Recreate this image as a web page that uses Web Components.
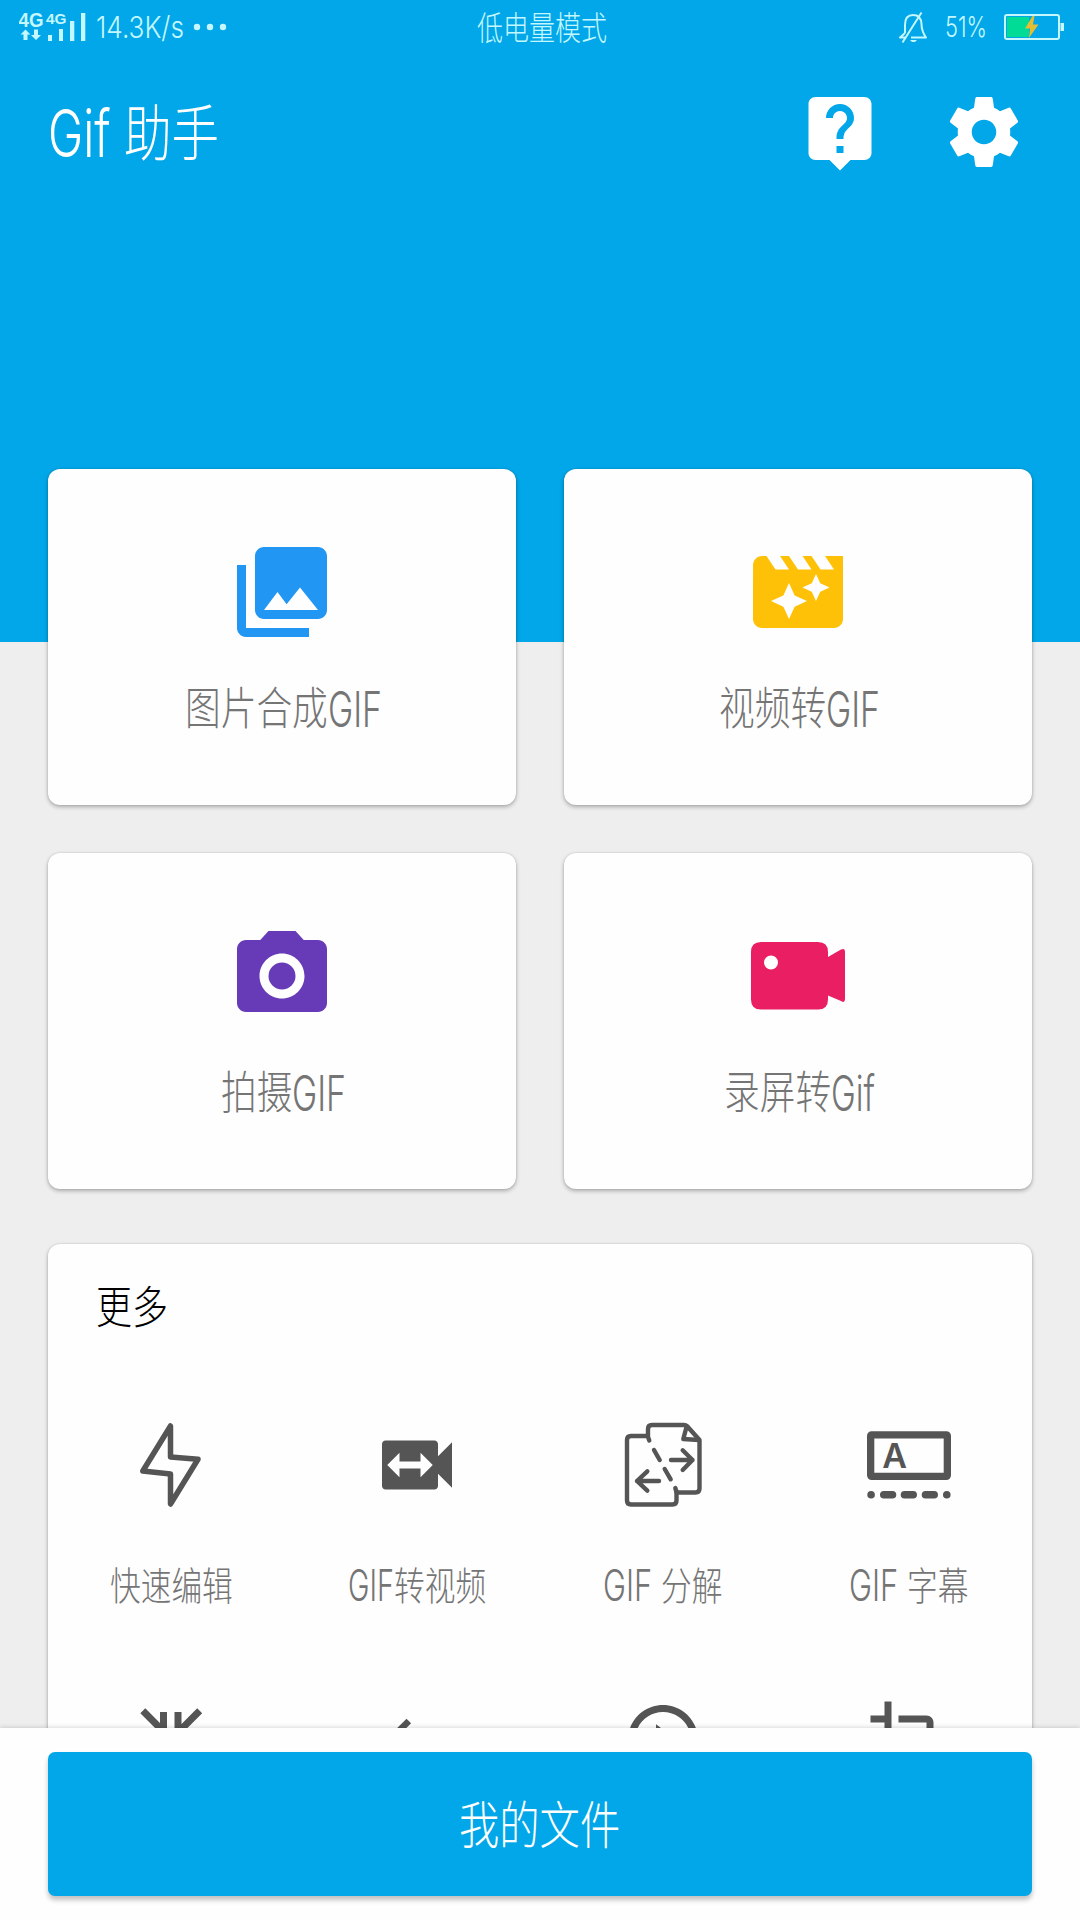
<!DOCTYPE html>
<html lang="zh-CN">
<head>
<meta charset="utf-8">
<title>Gif 助手</title>
<style>
    html, body {
        margin: 0;
        padding: 0;
    }
    body {
        width: 1080px;
        height: 1920px;
        overflow: hidden;
        font-family: "Inter", "Noto Sans CJK SC", sans-serif;
    }
</style>
</head>
<body>
<gif-home></gif-home>

<script>
"use strict";

const ICONS = {
    help: '<path d="M19 2H5c-1.11 0-2 .9-2 2v14c0 1.1.89 2 2 2h4l3 3 3-3h4c1.1 0 2-.9 2-2V4c0-1.1-.9-2-2-2zm-6 16h-2v-2h2v2zm2.07-7.75l-.9.92C13.45 11.9 13 12.5 13 14h-2v-.5c0-1.1.45-2.1 1.17-2.83l1.24-1.26c.37-.36.59-.86.59-1.41 0-1.1-.9-2-2-2s-2 .9-2 2H8c0-2.21 1.79-4 4-4s4 1.79 4 4c0 .88-.36 1.68-.93 2.25z"/>',
    settings: '<path d="M19.43 12.98c.04-.32.07-.64.07-.98s-.03-.66-.07-.98l2.11-1.65c.19-.15.24-.42.12-.64l-2-3.46c-.12-.22-.39-.3-.61-.22l-2.49 1c-.52-.4-1.08-.73-1.69-.98l-.38-2.65C14.46 2.18 14.25 2 14 2h-4c-.25 0-.46.18-.49.42l-.38 2.65c-.61.25-1.17.59-1.69.98l-2.49-1c-.23-.09-.49 0-.61.22l-2 3.46c-.13.22-.07.49.12.64l2.11 1.65c-.04.32-.07.65-.07.98s.03.66.07.98l-2.11 1.65c-.19.15-.24.42-.12.64l2 3.46c.12.22.39.3.61.22l2.49-1c.52.4 1.08.73 1.69.98l.38 2.65c.03.24.24.42.49.42h4c.25 0 .46-.18.49-.42l.38-2.65c.61-.25 1.17-.59 1.69-.98l2.49 1c.23.09.49 0 .61-.22l2-3.46c.12-.22.07-.49-.12-.64l-2.11-1.65zM12 15.5c-1.93 0-3.5-1.57-3.5-3.5s1.57-3.5 3.5-3.5 3.5 1.57 3.5 3.5-1.57 3.5-3.5 3.5z"/>',
    photos: '<path fill-rule="evenodd" d="M22 16V4c0-1.1-.9-2-2-2H8c-1.1 0-2 .9-2 2v12c0 1.1.9 2 2 2h12c1.1 0 2-.9 2-2zM11 12l2.03 2.71L16 11l4 5H8l3-4zM2 6v14c0 1.1.9 2 2 2h14v-2H4V6H2z"/>',
    movie: '<path d="M18 4l2 3h-3l-2-3h-2l2 3h-3l-2-3H8l2 3H7L5 4H4c-1.1 0-1.99.9-1.99 2L2 18c0 1.1.9 2 2 2h16c1.1 0 2-.9 2-2V4h-4zm-6.75 11.25L10 18l-1.25-2.75L6 14l2.75-1.25L10 10l1.25 2.75L14 14l-2.75 1.25zm5.69-3.31L16 14l-.94-2.06L13 11l2.06-.94L16 8l.94 2.06L19 11l-2.06.94z"/>',
    camera: '<path fill-rule="evenodd" d="M9 2L7.17 4H4c-1.1 0-2 .9-2 2v12c0 1.1.9 2 2 2h16c1.1 0 2-.9 2-2V6c0-1.1-.9-2-2-2h-3.17L15 2H9zm3 15c-2.76 0-5-2.24-5-5s2.24-5 5-5 5 2.24 5 5-2.24 5-5 5z"/><circle cx="12" cy="12" r="3"/>',
    record: '<g transform="scale(.22222)"><path fill-rule="evenodd" d="M17 20H74Q84 20 84 30V35L97 27.5Q101 25.5 101 30V77Q101 81.500 97 79L84 73.500V77.500Q84 87.500 74 87.500H17Q7 87.500 7 77.500V30Q7 20 17 20ZM27 33.500A7 7 0 1 0 27 47.500A7 7 0 1 0 27 33.500Z"/></g>',
    switchVideo: '<path d="M18 9.500V6c0-.55-.45-1-1-1H3c-.55 0-1 .45-1 1v12c0 .55.45 1 1 1h14c.55 0 1-.45 1-1v-3.500l4 4v-13l-4 4zm-5 6V13H7v2.500L3.500 12 7 8.500V11h6V8.500l3.500 3.500-3.500 3.500z"/>',
    bolt: '<g transform="scale(.285714)"><path fill="none" stroke="currentColor" stroke-width="5.500" stroke-linejoin="round" d="M41.500 3V34L69 36.200L41.500 81V51L13.800 48Z"/></g>',
    split: `<g transform="scale(.285714)" fill="none" stroke="currentColor" stroke-width="4.400" stroke-linecap="round" stroke-linejoin="round">
        <path d="M26 13H10Q6 13 6 17V77.500Q6 81.500 10 81.500H51.500Q55.500 81.500 55.500 77.500V69.500H74.500Q78.500 69.500 78.500 65.500V17L66 3Q65 2 63 2H31Q27 2 27 6V14L28.300 17.500"/>
        <path d="M65.500 4L62.300 16L78 17"/>
        <path d="M33 27L38.700 37M43.700 46L49.700 56.300M54.300 65L55.500 69"/>
        <path d="M50 37H71.500M61.700 27.300L71.500 37L61.700 47"/>
        <path d="M38 58H16M26.300 48.300L16 58L26.300 67.700"/>
    </g>`,
    caption: `<g transform="scale(.285714)">
        <rect x="3.650" y="11.850" width="76.700" height="41.500" rx="1" fill="none" stroke="currentColor" stroke-width="7.300"/>
        <text x="27.700" y="44.800" text-anchor="middle" font-family="Inter, sans-serif" font-weight="600" font-size="34">A</text>
        <path fill="none" stroke="currentColor" stroke-width="7.600" stroke-linecap="round" d="M4.100 71.700h.01M16.800 71.700H25.500M37.500 71.700H46.200M58.500 71.700H67.200M79.800 71.700h.01"/>
    </g>`,
    merge: '<g transform="scale(.285714)"><path fill="none" stroke="currentColor" stroke-width="7" d="M13.800 12.800L34.500 33.500M34.500 14V37H12M70.700 12.800L49 34.500M49 14V37H72"/></g>',
    stroke: '<g transform="scale(.285714)"><path fill="none" stroke="currentColor" stroke-width="6.500" d="M33.800 23L14 42.800"/></g>',
    play: '<path d="M10 16.500l6-4.500-6-4.500v9zM12 2C6.480 2 2 6.480 2 12s4.480 10 10 10 10-4.480 10-10S17.520 2 12 2zm0 18c-4.410 0-8-3.590-8-8s3.590-8 8-8 8 3.590 8 8-3.590 8-8 8z"/>',
    crop: '<path d="M17 15h2V7c0-1.100-.9-2-2-2H9v2h8v8zM7 17V1H5v4H1v2h4v10c0 1.100.9 2 2 2h10v4h2v-4h4v-2H7z"/>'
};

class AppIcon extends HTMLElement {
    constructor() {
        super();
        this.attachShadow({ mode: 'open' });
    }
    connectedCallback() {
        const size = this.getAttribute('size') || 84;
        this.shadowRoot.innerHTML = `
            <style>
                :host { display: block; width: ${size}px; height: ${size}px; }
                svg { display: block; fill: currentColor; overflow: visible; }
            </style>
            <svg width="${size}" height="${size}" viewBox="0 0 24 24">${ICONS[this.getAttribute('name')]}</svg>
        `;
    }
}
customElements.define('app-icon', AppIcon);

// Condensed light label. Han and Latin runs are squeezed separately:
// han = "font size, advance per glyph", latin = "font size, width of the run"
class SlimText extends HTMLElement {
    constructor() {
        super();
        this.attachShadow({ mode: 'open' });
    }
    connectedCallback() {
        const text = this.getAttribute('text');
        const [hanSize, advance] = (this.getAttribute('han') || '45,35.7').split(',').map(Number);
        const [latinSize, latinWidth] = (this.getAttribute('latin') || '49,54').split(',').map(Number);
        this.shadowRoot.innerHTML = `
            <style>
                :host { display: flex; align-items: baseline; height: 60px; line-height: 60px; }
                .run { flex: none; height: 60px; }
                .ink { display: inline-block; line-height: 60px; white-space: pre; transform-origin: 0 50%; }
                .han { font-family: "Noto Sans CJK SC", sans-serif; font-weight: 300; font-size: ${hanSize}px; }
                .latin { font-family: "Inter", sans-serif; font-weight: 300; font-size: ${latinSize}px; }
            </style>
        `;
        for (const part of text.match(/[\u4e00-\u9fff]+|[^\u4e00-\u9fff]+/g)) {
            const han = /[\u4e00-\u9fff]/.test(part);
            const width = han ? advance * part.length : latinWidth;
            const run = document.createElement('span');
            const ink = document.createElement('span');
            run.className = 'run';
            ink.className = 'ink ' + (han ? 'han' : 'latin');
            ink.textContent = part;
            run.appendChild(ink);
            this.shadowRoot.appendChild(run);
            const natural = ink.getBoundingClientRect().width;
            run.style.width = width + 'px';
            ink.style.transform = `translateY(${han ? '-.035em' : '-.01em'}) scaleX(${width / natural})`;
        }
    }
}
customElements.define('slim-text', SlimText);

class StatusBar extends HTMLElement {
    constructor() {
        super();
        this.attachShadow({ mode: 'open' }).innerHTML = `
            <style>
                :host {
                    display: grid;
                    grid-template-columns: 1fr auto 1fr;
                    grid-template-rows: 54px;
                    align-items: center;
                    height: 54px;
                    padding: 0 15px 0 19px;
                    color: #c4f7ff;
                }
                .side { display: flex; align-items: center; height: 54px; }
                .right { justify-content: flex-end; }
                svg { display: block; fill: currentColor; }
                .speed { margin-left: 9px; }
                .dots { margin-left: 9px; }
                .percent { margin: 0 17px; }
            </style>
            <div class="side">
                <svg width="68" height="54" viewBox="19 0 68 54" font-family="Liberation Sans, sans-serif" font-weight="700">
                    <text x="18.500" y="27" font-size="20" textLength="25" lengthAdjust="spacingAndGlyphs">4G</text>
                    <text x="46" y="24" font-size="15.500" textLength="20.500" lengthAdjust="spacingAndGlyphs">4G</text>
                    <path d="M25.500 29.500l5 5h-3v5.500h-4v-5.500h-3zM36 40l5-5h-3v-5.500h-4v5.500h-3z"/>
                    <path d="M48 35h4v6h-4zM59 29h4v12h-4zM70 21h4.300v20H70zM81 13h4.300v28H81z"/>
                </svg>
                <slim-text class="speed" text="14.3K/s" latin="30,88"></slim-text>
                <svg class="dots" width="34" height="54"><circle cx="4" cy="27" r="3.200"/><circle cx="17" cy="27" r="3.200"/><circle cx="30" cy="27" r="3.200"/></svg>
            </div>
            <slim-text text="低电量模式" han="33,26"></slim-text>
            <div class="side right">
                <svg width="30" height="54" viewBox="898 0 30 54">
                    <path fill="none" stroke="currentColor" stroke-width="2" stroke-linejoin="round" d="M905 33V25Q905 15 913 15Q921 15 921.500 24Q921.500 31 926 37.500H911M905 33L900 37.500H905M902.500 42.500L921.500 12.500"/>
                    <path d="M910 40h7l-2 2h-3z"/>
                </svg>
                <slim-text class="percent" text="51%" latin="29,42"></slim-text>
                <svg width="61" height="54" viewBox="1004 0 61 54">
                    <path fill="#00dc96" d="M1007 17H1029V37H1007z"/>
                    <rect x="1005" y="15" width="54" height="24" rx="2" fill="none" stroke="currentColor" stroke-width="2"/>
                    <path d="M1060.500 23h3.500v8h-3.500z"/>
                    <path fill="#e3bd33" d="M1032.500 16L1025 28.500H1030L1029 38L1038.500 24.500H1033L1034.500 16z"/>
                </svg>
            </div>
        `;
    }
}
customElements.define('status-bar', StatusBar);

class TitleBar extends HTMLElement {
    constructor() {
        super();
        this.attachShadow({ mode: 'open' }).innerHTML = `
            <style>
                :host {
                    display: flex;
                    align-items: center;
                    justify-content: space-between;
                    height: 156px;
                    padding: 0 54px 0 48px;
                    color: #fff;
                }
                .actions { display: flex; gap: 60px; }
            </style>
            <slot></slot>
            <div class="actions"><slot name="action"></slot></div>
        `;
    }
}
customElements.define('title-bar', TitleBar);

class FeatureCard extends HTMLElement {
    constructor() {
        super();
        this.attachShadow({ mode: 'open' }).innerHTML = `
            <style>
                :host {
                    display: flex;
                    flex-direction: column;
                    align-items: center;
                    box-sizing: border-box;
                    height: 336px;
                    padding-top: 69px;
                    border-radius: 12px;
                    background: #fefefe;
                    color: #757575;
                    box-shadow: 0 2px 4px rgba(0, 0, 0, .28), 0 0 2px rgba(0, 0, 0, .15);
                }
                .label { margin: 32px 0 0 3px; }
            </style>
            <slot name="icon"></slot>
            <div class="label"><slot></slot></div>
        `;
    }
}
customElements.define('feature-card', FeatureCard);

class ToolItem extends HTMLElement {
    constructor() {
        super();
        this.attachShadow({ mode: 'open' }).innerHTML = `
            <style>
                :host {
                    display: flex;
                    flex-direction: column;
                    align-items: center;
                    height: 275px;
                    color: #757575;
                }
                .icon { color: #555; }
                .label { margin-top: 47px; }
            </style>
            <div class="icon"><slot name="icon"></slot></div>
            <div class="label"><slot></slot></div>
        `;
    }
}
customElements.define('tool-item', ToolItem);

class MorePanel extends HTMLElement {
    constructor() {
        super();
        this.attachShadow({ mode: 'open' }).innerHTML = `
            <style>
                :host {
                    display: block;
                    padding-top: 33px;
                    border-radius: 12px;
                    background: #fefefe;
                    box-shadow: 0 2px 4px rgba(0, 0, 0, .28), 0 0 2px rgba(0, 0, 0, .15);
                }
                .heading { padding-left: 48px; color: #000; }
                .grid {
                    display: grid;
                    grid-template-columns: repeat(4, 1fr);
                    margin-top: 86px;
                }
            </style>
            <div class="heading"><slot name="heading"></slot></div>
            <div class="grid"><slot></slot></div>
        `;
    }
}
customElements.define('more-panel', MorePanel);

class FilesButton extends HTMLElement {
    constructor() {
        super();
        this.attachShadow({ mode: 'open' }).innerHTML = `
            <style>
                :host {
                    display: block;
                    position: relative;
                    box-sizing: border-box;
                    height: 192px;
                    padding: 24px 48px;
                    background: #fefefe;
                    box-shadow: 0 -1px 4px rgba(0, 0, 0, .14);
                }
                button {
                    display: flex;
                    align-items: center;
                    justify-content: center;
                    width: 100%;
                    height: 144px;
                    padding: 0;
                    border: 0;
                    border-radius: 7px;
                    background: #01a7e8;
                    color: #fff;
                    box-shadow: 0 4px 5px rgba(0, 0, 0, .24);
                }
            </style>
            <button><slot></slot></button>
        `;
    }
}
customElements.define('files-button', FilesButton);

class GifHome extends HTMLElement {
    constructor() {
        super();
        this.attachShadow({ mode: 'open' }).innerHTML = `
            <style>
                :host {
                    display: flex;
                    flex-direction: column;
                    width: 1080px;
                    height: 1920px;
                    overflow: hidden;
                    background: linear-gradient(#01a7e8 642px, #eee 642px);
                }
                main {
                    flex: 1;
                    min-height: 0;
                    overflow: hidden;
                    padding: 259px 48px 0;
                }
                .cards {
                    display: grid;
                    grid-template-columns: 1fr 1fr;
                    gap: 48px;
                    margin-bottom: 55px;
                }
            </style>
            <status-bar></status-bar>
            <title-bar>
                <slim-text text="Gif 助手" han="61,47.500" latin="66,76"></slim-text>
                <app-icon slot="action" name="help"></app-icon>
                <app-icon slot="action" name="settings"></app-icon>
            </title-bar>
            <main>
                <div class="cards">
                    <feature-card>
                        <app-icon slot="icon" name="photos" size="108" style="color: #2196f3"></app-icon>
                        <slim-text text="图片合成GIF"></slim-text>
                    </feature-card>
                    <feature-card>
                        <app-icon slot="icon" name="movie" size="108" style="color: #ffc107"></app-icon>
                        <slim-text text="视频转GIF"></slim-text>
                    </feature-card>
                    <feature-card>
                        <app-icon slot="icon" name="camera" size="108" style="color: #673ab7"></app-icon>
                        <slim-text text="拍摄GIF"></slim-text>
                    </feature-card>
                    <feature-card>
                        <app-icon slot="icon" name="record" size="108" style="color: #e91e63"></app-icon>
                        <slim-text text="录屏转Gif" latin="49,44"></slim-text>
                    </feature-card>
                </div>
                <more-panel>
                    <slim-text slot="heading" text="更多" han="45,36"></slim-text>
                    <tool-item>
                        <app-icon slot="icon" name="bolt"></app-icon>
                        <slim-text text="快速编辑" han="39,30.700"></slim-text>
                    </tool-item>
                    <tool-item>
                        <app-icon slot="icon" name="switchVideo"></app-icon>
                        <slim-text text="GIF转视频" han="39,30.700" latin="43,46"></slim-text>
                    </tool-item>
                    <tool-item>
                        <app-icon slot="icon" name="split"></app-icon>
                        <slim-text text="GIF 分解" han="39,30.700" latin="43,58"></slim-text>
                    </tool-item>
                    <tool-item>
                        <app-icon slot="icon" name="caption"></app-icon>
                        <slim-text text="GIF 字幕" han="39,30.700" latin="43,58"></slim-text>
                    </tool-item>
                    <tool-item><app-icon slot="icon" name="merge"></app-icon></tool-item>
                    <tool-item><app-icon slot="icon" name="stroke"></app-icon></tool-item>
                    <tool-item><app-icon slot="icon" name="play"></app-icon></tool-item>
                    <tool-item><app-icon slot="icon" name="crop"></app-icon></tool-item>
                </more-panel>
            </main>
            <files-button><slim-text text="我的文件" han="51,40.300"></slim-text></files-button>
        `;
    }
}
customElements.define('gif-home', GifHome);
</script>
</body>
</html>
